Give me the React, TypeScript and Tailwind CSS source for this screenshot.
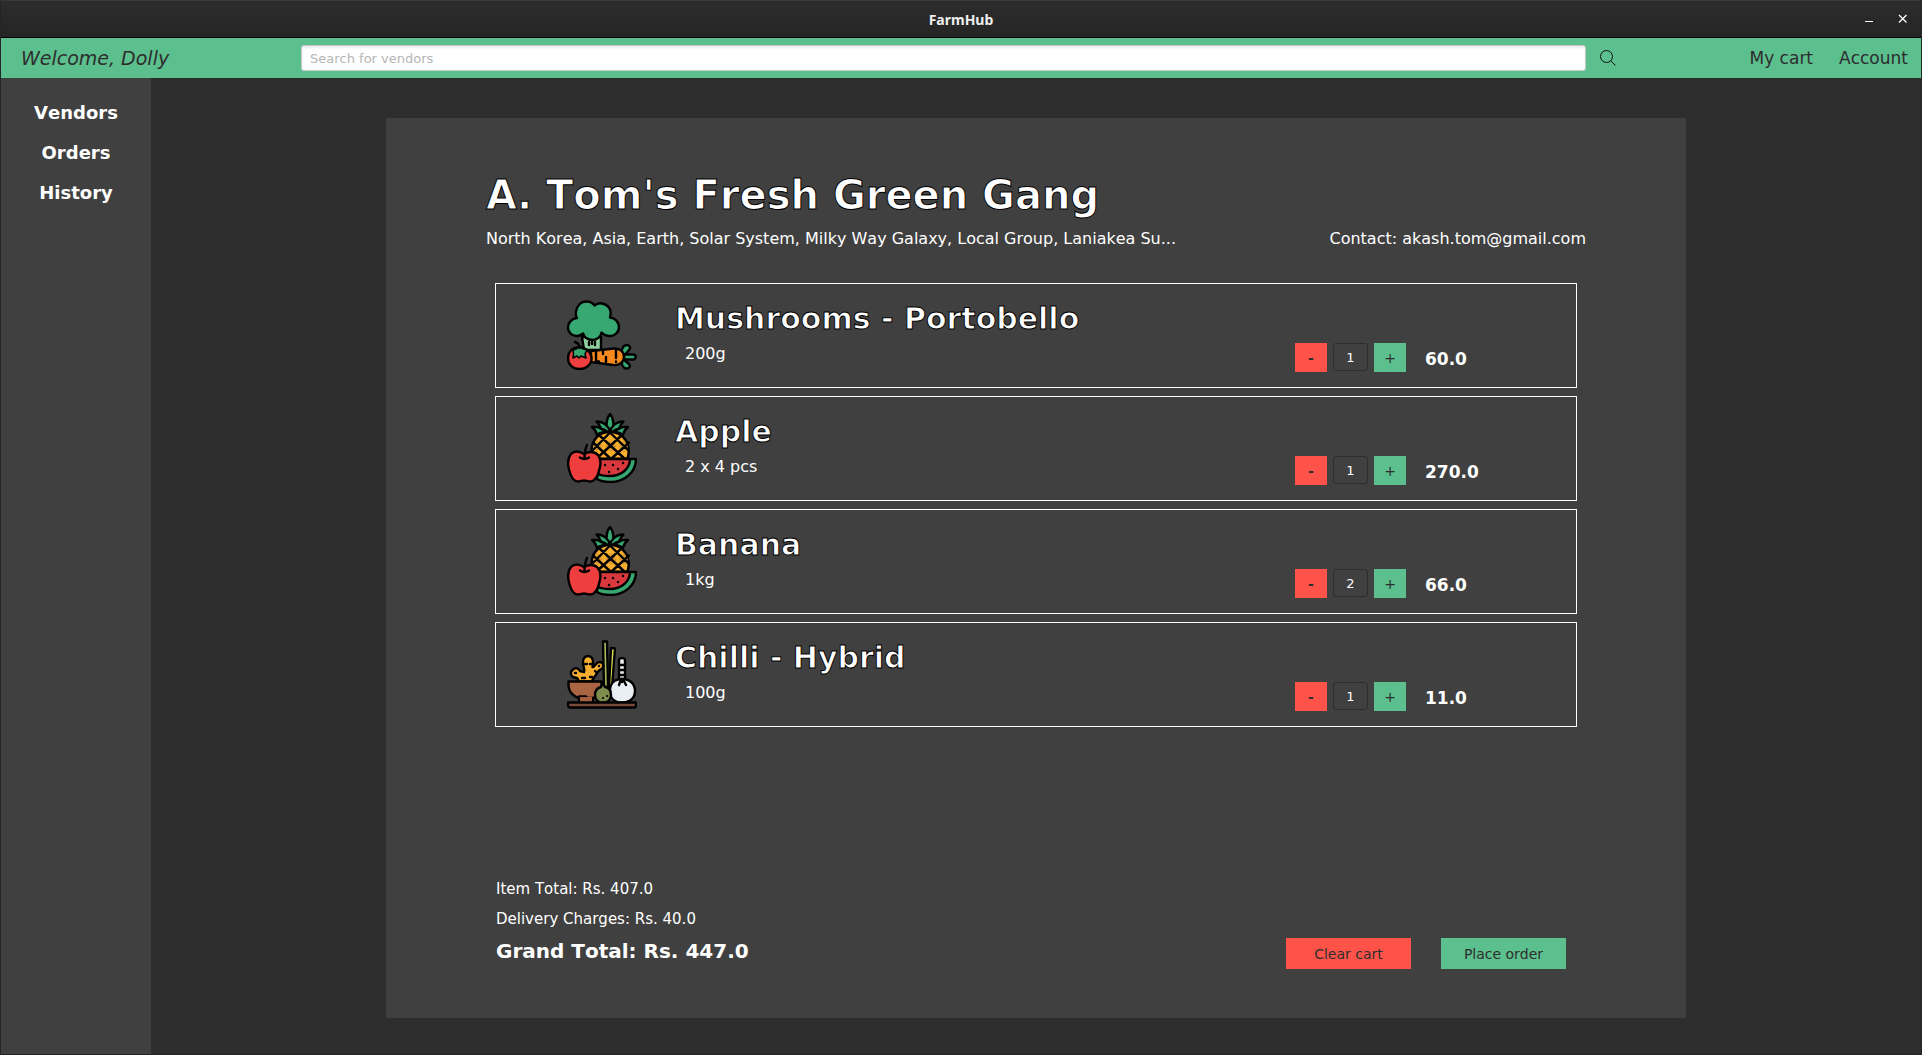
import { useState } from "react";

const ink = {
  stroke: "#000",
  strokeWidth: 2.4,
  strokeLinejoin: "round" as const,
  strokeLinecap: "round" as const,
};

function VegetablesIcon() {
  return (
    <svg viewBox="0 0 70 70" className="size-[70px] shrink-0" aria-hidden="true" {...ink}>
      <path d="M15 37 L17 50 L34 50 L34 37 Z" fill="#8fd19e" />
      <path d="M22 42v3M28 42v3M25 40v4" fill="none" />
      <path
        d="M19 1.5c4 0 7 1.5 8.500 4C30 3.500 33 3 35 3.500c6 1 9.500 6 8.500 11 0 1-.2 2-.5 3 5 .5 9 4.500 9 9.500 0 6-5 9.500-10 9-3 0-5.500-1.500-7.500-3.500C34 37 30 40 25.500 40c-4.500 0-8-2.500-9.500-6.500-2 1.500-4 2.500-6.500 2.500C4.500 36 1 32 1 27.500c0-5 4-9 9-9.500-1-1.500-1.500-3.500-1-6.500 1-6 5-10 10-10Z"
        fill="#37a871"
      />
      <path d="M55 54c-1-4 .5-8 4-9 3-.5 5 2 3.500 4.500L57 56Z" fill="#37a871" />
      <path d="M57 54.500h9c3.500 0 3.500 5 0 5h-9Z" fill="#37a871" />
      <path d="M56 59l6 5c2 2 0 5-3 4.500-3-.5-4.500-4-4-8Z" fill="#37a871" />
      <path d="M24 51 47 48.500c6-.5 10 3.500 10 8.500s-5 9-11 8L24 62Z" fill="#f78a1e" />
      <path d="M29 51v10.500h3M36 50v4M39 57v5M49 50v8M49 61.500v.5" fill="none" />
      <path d="M12 47.500c7 0 12.500 4.500 12.500 11S19 69 12.500 69 1 65 1 58.500s4-11 11-11Z" fill="#ee3e3e" />
      <path
        d="M6 50l4-1.500L13 46l2 2.500 5 1.500-2 4 1 4-5-2-2 2-2-2-4 2 .5-4Z"
        fill="#37a871"
        strokeWidth="1.600"
      />
      <path d="M12.500 48c0-3-1.500-5-4.500-6" fill="none" />
    </svg>
  );
}

function FruitsIcon() {
  return (
    <svg viewBox="0 0 70 70" className="size-[70px] shrink-0" aria-hidden="true" {...ink}>
      <path
        d="M30 22c-1-4-3-6.500-5-8 4-.5 7 0 9.500 2-1.500-3-3-5.500-5-7.500 4 0 7.500 1.500 10 4C39.500 8 40.500 4 43 1c2.500 3 3.500 7 3.500 11.500 2.500-2.500 6-4 10-4-2 2-3.500 4.500-5 7.500 2.500-2 5.500-2.500 9.500-2-2 1.500-4 4-5 8-4-3-9-3.500-13-3.500S34 19 30 22Z"
        fill="#37a871"
      />
      <path d="M34.500 16c3 .5 5 2 6 4M51.500 16c-3 .5-5 2-6 4M39.500 12.500c2 2 3 4 3.500 6 .5-2 1.500-4 3.500-6" fill="none" />
      <path d="M27 46c-4-7-2.500-17 3-22 3-3.500 8-5 13-5s10 1.500 13 5c5.500 5 7.500 15 4 22Z" fill="#f8ae2f" />
      <path d="M44 27l6 6-6 6-6-6ZM30 27l6 6-6 6-4-5ZM57 27l4 6-4 6-6-6Z" fill="#dc9a32" stroke="none" />
      <path d="M32 22l27 25M43 19.500 62 38M26 29.500 44 46M55 22 28 47M43 19.500 25 38M62 29.500 44 46" fill="none" />
      <path d="M31 46h38c0 13-11 23-26 23-5 0-10-1-13-3Z" fill="#37a871" />
      <path d="M31 46h32c0 10-9 17-20 17-4 0-9-.5-12-2Z" fill="#d9383d" />
      <path d="M38 52h.1M46 52h.1M56 50h.1M51 56h.1M42 59h.1" fill="none" />
      <path
        d="M17 41c6-3 11-2 14 1 3 4 3 9 1.500 14-1.500 7-5 12.500-9.500 12.500-2.500 0-4-1-6-1s-3.500 1-6 1c-4.500 0-7.500-5.500-9-12C.5 50 .5 45 4 41c3-3 8-3 13 0Z"
        fill="#ee3e3e"
      />
      <path d="M13 44.500c3 2 6 2 9 0M17.500 46c0-6 .5-10 2.500-14" fill="none" />
    </svg>
  );
}

function SpicesIcon() {
  return (
    <svg viewBox="0 0 70 70" className="size-[70px] shrink-0" aria-hidden="true" {...ink}>
      <path d="M36 2.500h4L41 48h-4Z" fill="#a9bd5c" />
      <path d="M44 9l4 .5L45 48h-3Z" fill="#dbe04f" />
      <path
        d="M11 42.500c1-2-.5-4-3-4-4 0-5.500-5-2.500-7.500C8 28 12 29 13 32l4 1c1-3-.5-5-1-8-.5-5 1.500-8 5-8s5.500 3 5 8l-.5 3c3 0 3-5 7-5 4.500 0 5 6 1 7.500-3 1-3 4-5 6l-4 6Z"
        fill="#f8ae2f"
      />
      <path d="M18 25h2M23 25h1M15 39h3M23 38h2M8 34h1M32 27h.1M28 32l2 2" fill="none" />
      <path d="M12 56h14v8H12Z" fill="#a4603f" />
      <path d="M1.500 42.500h33V49c0 6-4 10-10 10H15C7 59 1.500 53 1.500 46Z" fill="#a96443" />
      <path d="M12 57.500h7" fill="none" />
      <path d="M13 58h12v5H13Z" fill="#a4603f" stroke="none" />
      <path d="M52 41V21c0-2.500 6-2.500 6 0v20Z" fill="#e9eef2" />
      <path d="M52 26h6M52 31h6M52 36h6" fill="none" />
      <path d="M55 40c8 0 13 5 13 12s-5 11.500-13 11.500S43 59 43 52s4-12 12-12Z" fill="#e9eef2" />
      <path d="M54 40l-2 6M56 40l3 6M55 40v3" fill="none" />
      <path d="M36 44l2 4c4 .5 6 4 6 8s-3 8-8 8-8-4-8-8 2-7 6-8Z" fill="#7e8c4c" />
      <path d="M36 59h.1M40 57h.1" fill="none" strokeWidth="2" />
      <path d="M1 63.500h68v3c0 1-1 2-2 2H3c-1 0-2-1-2-2Z" fill="#7a4a38" />
    </svg>
  );
}

type Item = { name: string; unit: string; unitPrice: number; quantity: number; Icon: () => React.JSX.Element };

const initialItems: Item[] = [
  { name: "Mushrooms - Portobello", unit: "200g", unitPrice: 60, quantity: 1, Icon: VegetablesIcon },
  { name: "Apple", unit: "2 x 4 pcs", unitPrice: 270, quantity: 1, Icon: FruitsIcon },
  { name: "Banana", unit: "1kg", unitPrice: 33, quantity: 2, Icon: FruitsIcon },
  { name: "Chilli - Hybrid", unit: "100g", unitPrice: 11, quantity: 1, Icon: SpicesIcon },
];

const DELIVERY = 40;

function CartRow({ item, onChange }: { item: Item; onChange: (quantity: number) => void }) {
  return (
    <li className="flex h-[105px] border border-white pt-4 pr-[151px] pl-[71px]">
      <item.Icon />
      <div className="ml-[38px] flex-1">
        <h2 className="text-[30px] leading-[38px] font-bold [-webkit-text-stroke:1px_#000]">{item.name}</h2>
        <p className="pl-2.5 text-base leading-8">{item.unit}</p>
      </div>
      <div className="mb-[15px] flex h-[29px] w-[112px] gap-1.5 self-end">
        <button
          type="button"
          aria-label={`Remove one ${item.name}`}
          onClick={() => onChange(Math.max(0, item.quantity - 1))}
          className="w-8 bg-[#ff5349] text-sm font-bold text-[#2d2d2d]"
        >
          -
        </button>
        <input
          aria-label={`Quantity of ${item.name}`}
          value={item.quantity}
          onChange={(e) => onChange(Number(e.target.value) || 0)}
          className="h-7 w-[35px] rounded-[3px] border border-[#2d2d2d] text-center text-[13px]"
        />
        <button
          type="button"
          aria-label={`Add one ${item.name}`}
          onClick={() => onChange(item.quantity + 1)}
          className="w-8 bg-[#5cbf8e] text-sm text-[#2d2d2d]"
        >
          +
        </button>
      </div>
      <p className="mb-4 ml-[18px] w-0 self-end text-[17px] leading-6 font-bold">
        {(item.unitPrice * item.quantity).toFixed(1)}
      </p>
    </li>
  );
}

export default function App() {
  const [items, setItems] = useState(initialItems);
  const total = items.reduce((sum, item) => sum + item.unitPrice * item.quantity, 0);

  const setQuantity = (index: number, quantity: number) =>
    setItems(items.map((item, i) => (i === index ? { ...item, quantity } : item)));

  return (
    <div className="flex min-h-screen flex-col border-x border-b border-[#252525] bg-[#2d2d2d] font-['DejaVu_Sans',sans-serif] text-white [font-kerning:none]">
      <div className="grid h-[38px] grid-cols-[1fr_auto_1fr] items-center border-t border-b border-t-[#3a3a3a] border-b-black bg-linear-to-b from-[#2c2c2c] to-[#252525] pt-0.5">
        <h1 className="col-start-2 font-['Noto_Sans',sans-serif] text-sm font-bold text-[#eeeeee]">FarmHub</h1>
        <div className="flex justify-end gap-3.5 pr-2">
          <button type="button" aria-label="Minimize" className="size-5">
            <svg viewBox="0 0 20 20" aria-hidden="true">
              <path d="M6 11.500h8" stroke="#fff" />
            </svg>
          </button>
          <button type="button" aria-label="Close" className="size-5">
            <svg viewBox="0 0 20 20" aria-hidden="true">
              <path d="M6 5l7.500 7.500M13.500 5 6 12.500" stroke="#fff" strokeWidth="1.300" />
            </svg>
          </button>
        </div>
      </div>

      <header className="flex h-10 items-center bg-[#5cbf8e] text-[#2d2d2d]">
        <p className="w-[300px] pl-5 text-[19px] italic">Welcome, Dolly</p>
        <form className="flex flex-1 items-center gap-3.5" onSubmit={(e) => e.preventDefault()}>
          <input
            type="search"
            aria-label="Search for vendors"
            placeholder="Search for vendors"
            className="h-[26px] flex-1 rounded-[3px] border border-[#c8c8c8] bg-white px-2 text-[13px] shadow-[inset_0_2px_2px_#ececec] placeholder:text-[#b5b5b5]"
          />
          <button type="submit" aria-label="Search" className="size-4">
            <svg viewBox="0 0 16 16" fill="none" stroke="#101010" aria-hidden="true">
              <circle cx="6.500" cy="6.500" r="6" />
              <path d="m11 11 4.500 4.500" />
            </svg>
          </button>
        </form>
        <nav className="flex w-[305px] justify-end gap-[26px] pt-0.5 pr-[13px] text-[17px]">
          <a href="#cart">My cart</a>
          <a href="#account">Account</a>
        </nav>
      </header>

      <div className="flex flex-1">
        <nav className="flex w-[150px] flex-col items-center gap-4 bg-[#404040] pt-[23px] text-lg leading-6 font-bold">
          <a href="#vendors">Vendors</a>
          <a href="#orders">Orders</a>
          <a href="#history">History</a>
        </nav>

        <main className="flex flex-1 justify-center py-10 pb-9">
          <section className="flex w-full max-w-[1300px] flex-col bg-[#404040] px-[100px] pt-[51px] pb-[49px]">
            <h1 className="text-[40px] leading-[52px] font-bold [-webkit-text-stroke:1px_#000]">
              A. Tom's Fresh Green Gang
            </h1>
            <div className="mt-1.5 flex justify-between text-base leading-6">
              <p>North Korea, Asia, Earth, Solar System, Milky Way Galaxy, Local Group, Laniakea Su...</p>
              <p>Contact: akash.tom@gmail.com</p>
            </div>

            <ul className="mx-[9px] mt-8 flex flex-col gap-2">
              {items.map((item, i) => (
                <CartRow key={item.name} item={item} onChange={(quantity) => setQuantity(i, quantity)} />
              ))}
            </ul>

            <div className="mt-auto flex items-end justify-between pr-5 pl-2.5">
              <div className="text-[15px] leading-[30px]">
                <p>Item Total: Rs. {total.toFixed(1)}</p>
                <p>Delivery Charges: Rs. {DELIVERY.toFixed(1)}</p>
                <p className="text-xl leading-[35px] font-bold">Grand Total: Rs. {(total + DELIVERY).toFixed(1)}</p>
              </div>
              <div className="flex gap-[30px] text-sm text-[#2d2d2d]">
                <button type="button" onClick={() => setItems([])} className="h-[31px] w-[125px] bg-[#ff5349]">
                  Clear cart
                </button>
                <button type="button" className="h-[31px] w-[125px] bg-[#5cbf8e]">
                  Place order
                </button>
              </div>
            </div>
          </section>
        </main>
      </div>
    </div>
  );
}
